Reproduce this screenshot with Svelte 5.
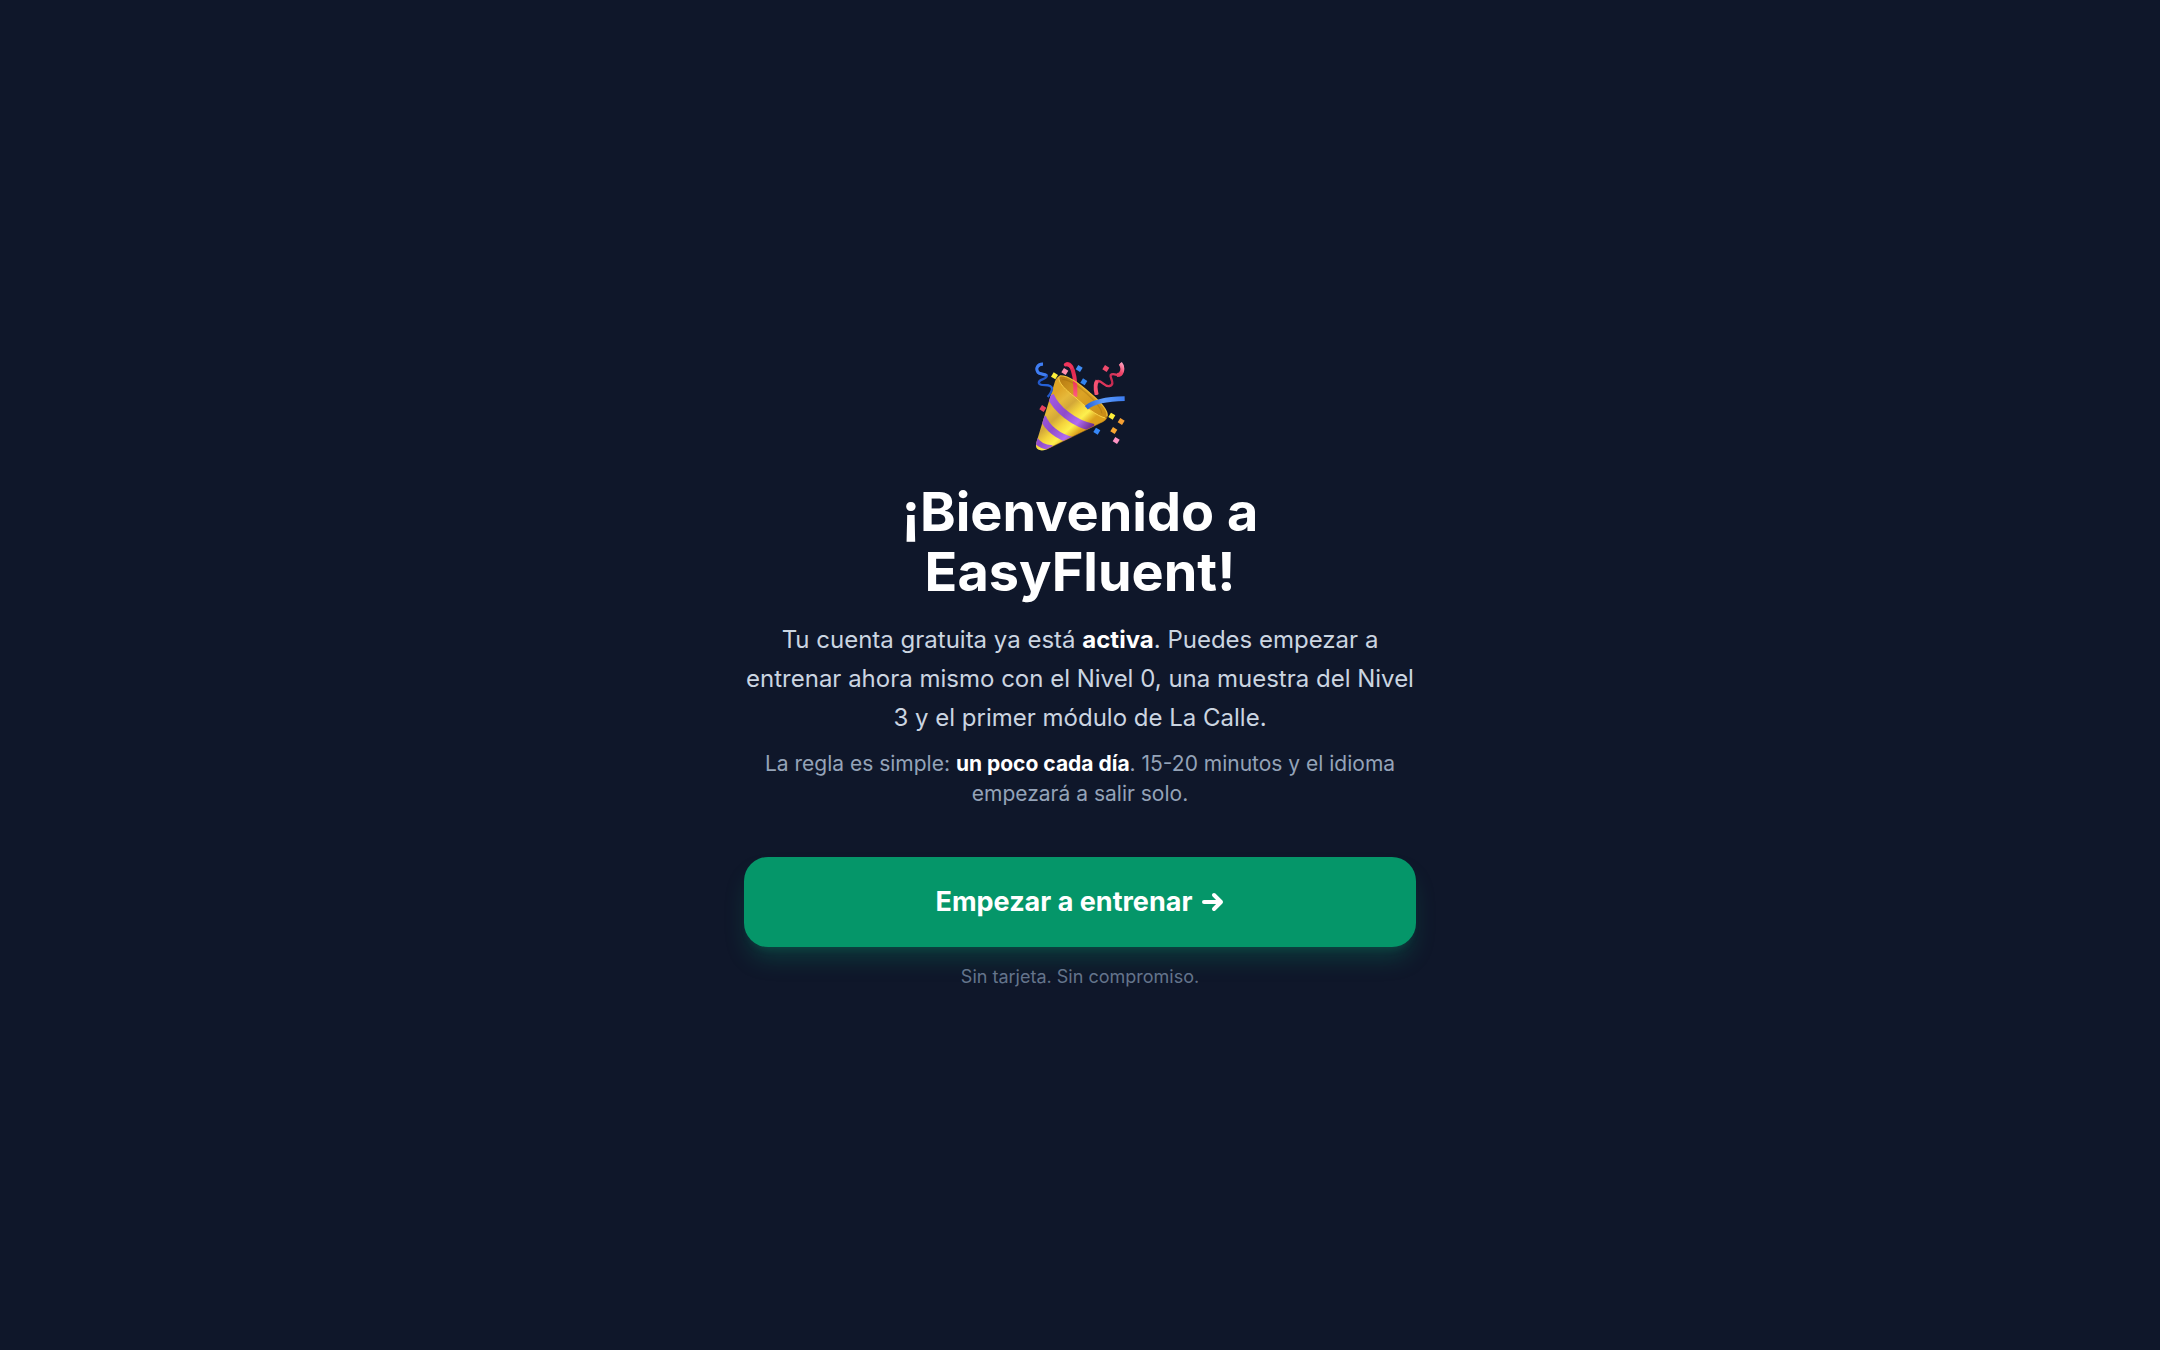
<script lang="ts">
  const confetti = [
    { x: 88, y: 76, color: '#fdf03a' },
    { x: 119, y: 63, color: '#ff8fae' },
    { x: 162, y: 54, color: '#3f8cf5' },
    { x: 176, y: 94, color: '#3083ee' },
    { x: 242, y: 54, color: '#ee4a6c' },
    { x: 53, y: 174, color: '#e6405f' },
    { x: 260, y: 197, color: '#fdf03a' },
    { x: 288, y: 213, color: '#f5a033' },
    { x: 266, y: 240, color: '#f8a630' },
    { x: 215, y: 242, color: '#3688f8' },
    { x: 273, y: 270, color: '#ff94c4' },
  ];
</script>

<main class="page">
  <section class="welcome">
    <svg class="popper" viewBox="30 34 270 270" role="img" aria-label="Fiesta">
      <defs>
        <linearGradient id="cone" gradientUnits="userSpaceOnUse" x1="60" y1="155" x2="150" y2="255">
          <stop offset="0" stop-color="#dfa526" />
          <stop offset=".22" stop-color="#e6b93a" />
          <stop offset=".42" stop-color="#d3a838" />
          <stop offset=".62" stop-color="#f5d53c" />
          <stop offset=".8" stop-color="#fdf04e" />
          <stop offset="1" stop-color="#dca01c" />
        </linearGradient>
        <linearGradient id="band" gradientUnits="userSpaceOnUse" x1="60" y1="150" x2="180" y2="250">
          <stop offset="0" stop-color="#a35be6" />
          <stop offset=".45" stop-color="#8f4bcb" />
          <stop offset=".75" stop-color="#b06bf0" />
          <stop offset="1" stop-color="#6f2f8f" />
        </linearGradient>
        <linearGradient id="mouth" gradientUnits="userSpaceOnUse" x1="110" y1="80" x2="235" y2="195">
          <stop offset="0" stop-color="#b87c12" />
          <stop offset=".45" stop-color="#dca325" />
          <stop offset="1" stop-color="#c98d16" />
        </linearGradient>
        <linearGradient id="redRibbon" gradientUnits="userSpaceOnUse" x1="140" y1="40" x2="150" y2="138">
          <stop offset="0" stop-color="#d9264b" />
          <stop offset=".5" stop-color="#ec3159" />
          <stop offset="1" stop-color="#ff5c80" />
        </linearGradient>
        <linearGradient id="blueRibbon" gradientUnits="userSpaceOnUse" x1="185" y1="170" x2="298" y2="142">
          <stop offset="0" stop-color="#2a62d4" />
          <stop offset=".45" stop-color="#5b9cff" />
          <stop offset="1" stop-color="#3d7df0" />
        </linearGradient>
        <linearGradient id="pinkRibbon" gradientUnits="userSpaceOnUse" x1="210" y1="130" x2="295" y2="38">
          <stop offset="0" stop-color="#ff86a0" />
          <stop offset=".2" stop-color="#ef3f62" />
          <stop offset=".5" stop-color="#c2284f" />
          <stop offset=".8" stop-color="#f04468" />
          <stop offset="1" stop-color="#ffa6c4" />
        </linearGradient>
        <clipPath id="coneClip">
          <path d="M104 76C97 86 106 106 147 137C184 170 215 196 241 202C245 201 247 198 246 195C247 206 238 212 226 217L62 297C50 302 34 299 33 287C32 281 35 272 38 263L90 92C93 84 97 78 104 76Z" />
        </clipPath>
      </defs>

      <path d="M104 76C125 73 161 97 195 128C226 154 250 182 247 197C243 209 211 200 180 184C145 165 112 132 101 104C98 91 98 80 104 76Z" fill="url(#mouth)" />
      <path d="M112 86C138 86 180 121 209 152C221 165 231 180 230 188" fill="none" stroke="#815207" stroke-width="4" opacity=".25" />
      <path d="M123 41C137 37 144 55 148 77C152 101 151 120 151 138" fill="none" stroke="url(#redRibbon)" stroke-width="12" />
      <path d="M122 42C128 39 134 42 139 49" fill="none" stroke="#ee355c" stroke-width="11" stroke-linecap="round" />

      <path d="M104 76C97 86 106 106 147 137C184 170 215 196 241 202C245 201 247 198 246 195C247 206 238 212 226 217L62 297C50 302 34 299 33 287C32 281 35 272 38 263L90 92C93 84 97 78 104 76Z" fill="url(#cone)" />
      <g clip-path="url(#coneClip)" fill="none" stroke="url(#band)">
        <path d="M76 134C92 173 146 220 206 231" stroke-width="22" />
        <path d="M53 199C66 231 98 259 143 269" stroke-width="20" />
        <path d="M30 264C37 279 51 289 82 292" stroke-width="16" />
      </g>
      <path d="M63 297L226 217C239 211 248 204 247 194" fill="none" stroke="#b9780f" stroke-width="3" opacity=".5" />
      <path d="M104 76C97 86 106 106 147 137C184 170 215 196 241 202" fill="none" stroke="#f9d247" stroke-width="3" />
      <path d="M104 76C126 73 162 98 195 128C226 154 249 181 246 196" fill="none" stroke="#edbb33" stroke-width="4" />
      <path d="M184 171C205 153 244 145 299 144" fill="none" stroke="url(#blueRibbon)" stroke-width="14" />

      <path d="M54 40C35 41 32 55 39 65C48 76 69 66 65 78C61 88 38 85 42 98C46 108 82 98 81 115C80 125 75 131 68 139" fill="none" stroke="#2359ca" stroke-width="7" />
      <path d="M54 40C35 41 32 55 39 65C45 71 56 69 64 75" fill="none" stroke="#3f7df2" stroke-width="9" />
      <path d="M44 101C60 106 80 97 81 115" fill="none" stroke="#2867df" stroke-width="4" />
      <path d="M215 132C210 110 211 92 219 91C232 90 239 109 253 106C273 101 253 80 257 73C265 64 285 82 291 66C295 56 293 44 286 38" fill="none" stroke="url(#pinkRibbon)" stroke-width="7" />
      <path d="M215 132C210 110 211 97 217 91" fill="none" stroke="#f65272" stroke-width="12" />
      <path d="M276 73C292 74 297 51 286 38" fill="none" stroke="url(#pinkRibbon)" stroke-width="12" />

      {#each confetti as piece}
        <path d="M{piece.x - 2} {piece.y - 11}L{piece.x + 11} {piece.y - 3}L{piece.x + 3} {piece.y + 10}L{piece.x - 10} {piece.y + 2}Z" fill={piece.color} />
      {/each}
    </svg>

    <h1>¡Bienvenido a EasyFluent!</h1>
    <p class="lead">
      Tu cuenta gratuita ya está <strong>activa</strong>. Puedes empezar a entrenar ahora mismo con el Nivel 0, una muestra del Nivel 3 y el primer módulo de La Calle.
    </p>
    <p class="rule">
      La regla es simple: <strong>un poco cada día</strong>. 15-20 minutos y el idioma empezará a salir solo.
    </p>
    <button type="button">
      <span>Empezar a entrenar</span>
      <svg class="arrow" viewBox="0 0 22 20" aria-hidden="true">
        <path d="M2 10H19M12 3L19 10L12 17" />
      </svg>
    </button>
    <p class="note">Sin tarjeta. Sin compromiso.</p>
  </section>
</main>

<style>
  :global(body) {
    margin: 0;
    background: #0f172a;
  }

  .page {
    box-sizing: border-box;
    min-height: 100vh;
    display: flex;
    align-items: center;
    justify-content: center;
    padding: 36px;
    font-family: Inter, 'Liberation Sans', sans-serif;
    color: #fff;
  }

  .welcome {
    width: 100%;
    max-width: 672px;
    display: flex;
    flex-direction: column;
    text-align: center;
  }

  .popper {
    width: 90px;
    height: 90px;
    margin: 0 auto 30px;
  }

  h1,
  p {
    margin: 0;
  }

  h1 {
    margin-bottom: 18px;
    font-size: 54px;
    line-height: 60px;
    font-weight: 700;
  }

  strong {
    font-weight: 700;
    color: #fff;
  }

  .lead {
    margin-bottom: 12px;
    font-size: 24px;
    line-height: 39px;
    color: #cbd5e1;
  }

  .rule {
    margin-bottom: 48px;
    font-size: 21px;
    line-height: 30px;
    color: #94a3b8;
  }

  button {
    display: flex;
    align-items: center;
    justify-content: center;
    gap: 10px;
    margin: 0 0 18px;
    padding: 24px;
    border: 0;
    border-radius: 24px;
    background: #059669;
    box-shadow:
      0 15px 23px -5px rgb(5 150 105 / 0.3),
      0 6px 9px -6px rgb(5 150 105 / 0.3);
    color: #fff;
    font: 700 27px/42px Inter, 'Liberation Sans', sans-serif;
    cursor: pointer;
  }

  .arrow {
    width: 22px;
    height: 20px;
    fill: none;
    stroke: currentColor;
    stroke-width: 4;
    stroke-linecap: round;
    stroke-linejoin: round;
  }

  .note {
    font-size: 18px;
    line-height: 24px;
    color: #64748b;
  }
</style>
